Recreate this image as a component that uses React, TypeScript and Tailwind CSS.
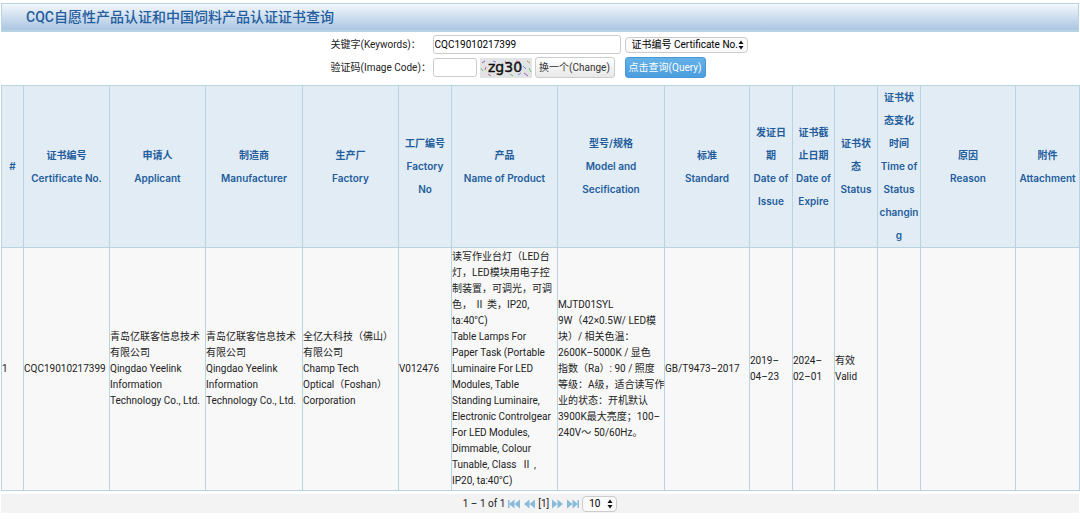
import { useState } from "react";

const columns = [
  { label: "#", width: 22 },
  { label: "证书编号\nCertificate No.", width: 86 },
  { label: "申请人\nApplicant", width: 96 },
  { label: "制造商\nManufacturer", width: 97 },
  { label: "生产厂\nFactory", width: 96 },
  { label: "工厂编号\nFactory\nNo", width: 53 },
  { label: "产品\nName of Product", width: 106 },
  { label: "型号/规格\nModel and\nSecification", width: 107 },
  { label: "标准\nStandard", width: 85 },
  { label: "发证日\n期\nDate of\nIssue", width: 43 },
  { label: "证书截\n止日期\nDate of\nExpire", width: 42 },
  { label: "证书状\n态\nStatus", width: 43 },
  { label: "证书状\n态变化\n时间\nTime of\nStatus\nchangin\ng", width: 43 },
  { label: "原因\nReason", width: 95 },
  { label: "附件\nAttachment", width: 64 },
];

const rows = [
  [
    "1",
    "CQC19010217399",
    "青岛亿联客信息技术\n有限公司\nQingdao Yeelink\nInformation\nTechnology Co., Ltd.",
    "青岛亿联客信息技术\n有限公司\nQingdao Yeelink\nInformation\nTechnology Co., Ltd.",
    "全亿大科技（佛山）\n有限公司\nChamp Tech\nOptical（Foshan）\nCorporation",
    "V012476",
    "读写作业台灯（LED台\n灯，LED模块用电子控\n制装置，可调光，可调\n色， Ⅱ 类，IP20,\nta:40℃)\nTable Lamps For\nPaper Task (Portable\nLuminaire For LED\nModules, Table\nStanding Luminaire,\nElectronic Controlgear\nFor LED Modules,\nDimmable, Colour\nTunable, Class  Ⅱ ,\nIP20, ta:40℃)",
    "MJTD01SYL\n9W（42×0.5W/ LED模\n块）/ 相关色温：\n2600K–5000K / 显色\n指数（Ra）: 90 / 照度\n等级：A级，适合读写作\n业的状态：开机默认\n3900K最大亮度；100–\n240V～ 50/60Hz。",
    "GB/T9473–2017",
    "2019–\n04–23",
    "2024–\n02–01",
    "有效\nValid",
    "",
    "",
    "",
  ],
];

function UpDown() {
  return (
    <svg viewBox="0 0 6 10" className="pointer-events-none relative -ml-2.5 h-[10px] w-[6px]" aria-hidden="true">
      <path d="M3 0.5 5.5 4H0.5zM3 9.5 0.5 6h5z" fill="#111" />
    </svg>
  );
}

const noise = [
  "M2 5l3-2", "M1 10l2 3", "M8 16l3 2", "M13 3l3 1", "M19 17l4-2", "M25 3l2 3", "M30 16l3 2",
  "M36 3l4 1", "M43 8l3 3", "M47 3l3 2", "M44 15l4 3", "M49 10l2 4", "M6 9l-1 3", "M38 17l3-2",
];
const noiseColors = ["#9b59b6", "#6fbf73", "#c0607f", "#7a8bd0", "#b9a04a"];

function Captcha() {
  return (
    <svg viewBox="0 0 52 20" className="h-5 w-[52px]" role="img" aria-label="zg30">
      <rect width="52" height="20" fill="#e2e3e4" />
      {noise.map((d, i) => (
        <path key={d} d={d} stroke={noiseColors[i % noiseColors.length]} strokeWidth="1" />
      ))}
      <text x="8" y="14" fontSize="14" fontFamily="DejaVu Sans, sans-serif" fill="#111" stroke="#111" strokeWidth="0.4">
        zg30
      </text>
    </svg>
  );
}

function PageArrow({ label, bar, flip }: { label: string; bar?: boolean; flip?: boolean }) {
  return (
    <button type="button" aria-label={label} className={flip ? "rotate-180" : ""}>
      <svg viewBox="0 0 12 10" className="h-[10px] w-3" fill="#8abbd9">
        {bar && <path d="M0 1h1.5v8H0z" />}
        <path d="M6.5 0.5v9L1 5zM12 0.5v9L6.5 5z" />
      </svg>
    </button>
  );
}

export default function App() {
  const [keyword, setKeyword] = useState("CQC19010217399");
  const [code, setCode] = useState("");

  return (
    <main className="bg-white px-px pt-[3px] font-['Roboto','Noto_Sans_CJK_SC',sans-serif] text-[10px] leading-4 text-[#222]">
      <header className="border border-b-2 border-[#b8d3e2] bg-linear-to-b from-[#f3f7fb] to-[#abc6e2] px-6">
        <h1 className="text-sm leading-[26px] font-medium text-[#245d9d]">
          CQC自愿性产品认证和中国饲料产品认证证书查询
        </h1>
      </header>

      <form className="flex justify-center pt-[3px] pr-1.5 pb-[7px]" onSubmit={(e) => e.preventDefault()}>
        <div className="grid grid-cols-[98px_auto] gap-x-1 gap-y-[3px]">
          <label htmlFor="keyword" className="self-center whitespace-nowrap">关键字(Keywords)：</label>
          <div className="flex items-center gap-1">
            <input
              id="keyword"
              value={keyword}
              onChange={(e) => setKeyword(e.target.value)}
              className="h-[19px] w-[188px] rounded-[3px] border border-[#ccc] px-px text-black"
            />
            <div className="flex items-center">
              <select
                aria-label="Search field"
                className="h-4 w-[123px] appearance-none rounded border border-[#ccc] bg-[#fafafa] pl-1.5 leading-[14px] text-black"
              >
                <option>证书编号 Certificate No.</option>
              </select>
              <UpDown />
            </div>
          </div>
          <label htmlFor="code" className="self-center whitespace-nowrap">验证码(Image Code)：</label>
          <div className="flex items-center gap-[3px]">
            <input
              id="code"
              value={code}
              onChange={(e) => setCode(e.target.value)}
              className="h-[19px] w-11 rounded-[3px] border border-[#ccc] px-px text-black"
            />
            <Captcha />
            <button
              type="button"
              className="h-[21px] w-20 rounded-[3px] border border-[#ccc] bg-linear-to-b from-white to-[#e8e8e8] whitespace-nowrap text-[#333]"
            >
              换一个(Change)
            </button>
            <button
              type="submit"
              className="ml-[7px] h-[21px] w-[81px] rounded-[3px] border border-[#4a98d6] bg-linear-to-b from-[#65b1e9] to-[#4b9ddd] whitespace-nowrap text-white"
            >
              点击查询(Query)
            </button>
          </div>
        </div>
      </form>

      <table className="w-full table-fixed border-collapse border border-[#b8d3e2]">
        <colgroup>
          {columns.map((c) => (
            <col key={c.label} style={{ width: c.width }} />
          ))}
        </colgroup>
        <thead className="font-['Inter','Noto_Sans_CJK_SC',sans-serif]">
          <tr className="bg-[#e1ecf4]">
            {columns.map((c) => (
              <th
                key={c.label}
                scope="col"
                className="border border-[#b8d3e2] p-0 text-center leading-[23px] font-semibold whitespace-pre text-[#245d9d]"
              >
                {c.label}
              </th>
            ))}
          </tr>
        </thead>
        <tbody>
          {rows.map((row) => (
            <tr key={row[0]} className="bg-[#f8f8f8]">
              {row.map((cell, i) => (
                <td key={columns[i].label} className="border border-[#b8d3e2] p-0 py-px align-middle whitespace-pre">
                  {cell}
                </td>
              ))}
            </tr>
          ))}
        </tbody>
      </table>

      <nav className="mt-[3px] flex h-[19px] items-center justify-center gap-[3px] pr-1 bg-[#f3f3f3]" aria-label="Pagination">
        <span>1 – 1 of 1</span>
        <PageArrow label="First page" bar />
        <PageArrow label="Previous page" />
        <span>[1]</span>
        <PageArrow label="Next page" flip />
        <PageArrow label="Last page" bar flip />
        <div className="flex items-center">
          <select
            aria-label="Rows per page"
            className="h-4 w-[35px] appearance-none rounded border border-[#ccc] bg-[#fafafa] pl-1.5 leading-[14px] text-black"
          >
            <option>10</option>
          </select>
          <UpDown />
        </div>
      </nav>
    </main>
  );
}
